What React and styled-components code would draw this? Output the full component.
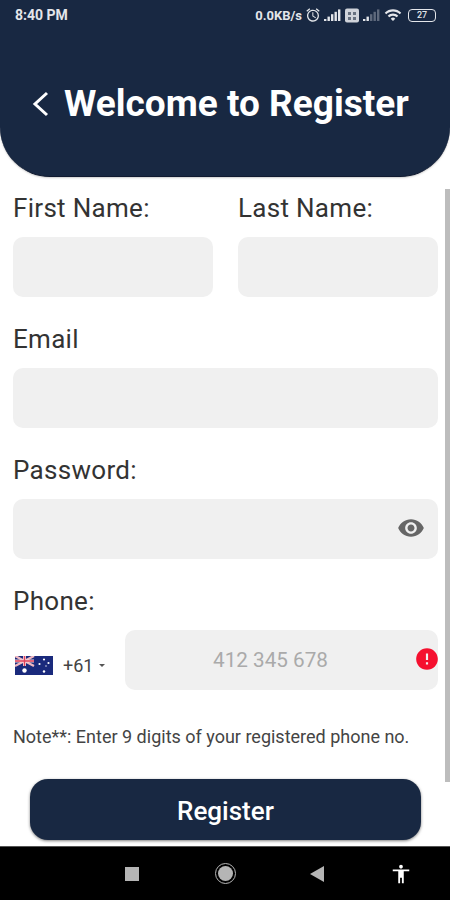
import { createGlobalStyle, styled } from "styled-components";
import { MdVisibility, MdError, MdAccessibility, MdWifi, MdAccessAlarm } from "react-icons/md";

const Global = createGlobalStyle`
  html, body {
    margin: 0;
    padding: 0;
    background: #fff;
    font-family: Roboto, "Liberation Sans", sans-serif;
  }
  * { box-sizing: border-box; }
`;

const Screen = styled.div`
  width: 450px;
  height: 900px;
  display: flex;
  flex-direction: column;
  overflow: hidden;
  position: relative;
`;

const Header = styled.header`
  height: 177px;
  flex-shrink: 0;
  background: #182842;
  border-radius: 0 0 50px 50px;
  border-bottom: 1px solid #101a30;
  box-shadow: 0 1px 2px rgba(0, 0, 0, 0.2);
  color: #fff;
  display: flex;
  flex-direction: column;
`;

const StatusBar = styled.div`
  height: 30px;
  padding: 0 14px 0 15px;
  display: flex;
  align-items: center;
  justify-content: space-between;
  font-size: 14px;
  font-weight: 700;
  color: #e4e6ea;
`;

const Speed = styled.span`
  font-size: 13px;
`;

const StatusRight = styled.div`
  display: flex;
  align-items: center;
  gap: 3px;
`;

const Battery = styled.span`
  width: 28px;
  height: 13px;
  margin-left: 3px;
  border: 1.5px solid #e4e6ea;
  border-radius: 4px;
  font-size: 9px;
  line-height: 10px;
  text-align: center;
  font-weight: 500;
`;

const TitleRow = styled.div`
  display: flex;
  align-items: center;
  gap: 14px;
  padding: 42px 0 0 30px;
`;

const Title = styled.h1`
  margin: 0;
  font-size: 37px;
  line-height: 64px;
  font-weight: 700;
`;

const Form = styled.form`
  padding: 12px 12px 0 13px;
  display: flex;
  flex-direction: column;
  gap: 23px;
`;

const Row = styled.div`
  display: flex;
  gap: 25px;
`;

const Field = styled.div`
  flex: 1;
  display: flex;
  flex-direction: column;
  gap: 10px;
`;

const Label = styled.label`
  font-size: 26px;
  line-height: 38px;
  height: 38px;
  color: #333;
  letter-spacing: 0.3px;
`;

const Input = styled.div`
  flex: ${(p) => (p.$grow ? 1 : "none")};
  height: 60px;
  background: #f0f0f0;
  border-radius: 10px;
  display: flex;
  align-items: center;
  justify-content: ${(p) => p.$justify || "flex-start"};
  position: relative;
`;

const Eye = styled(MdVisibility)`
  margin: 0 13px 2px 0;
  color: #666;
  font-size: 28px;
`;

const PhoneRow = styled.div`
  display: flex;
  align-items: center;
`;

const Dial = styled.div`
  width: 112px;
  padding: 10px 0 0 2px;
  display: flex;
  align-items: center;
  font-size: 18px;
  color: #444;
`;

const DialCode = styled.span`
  margin-left: 10px;
`;

const Caret = styled.span`
  width: 0;
  height: 0;
  margin-left: 6px;
  border-left: 3px solid transparent;
  border-right: 3px solid transparent;
  border-top: 3px solid #555;
`;

const Placeholder = styled.span`
  margin-left: 88px;
  font-size: 20.7px;
  color: #aaa;
`;

const Alert = styled(MdError)`
  position: absolute;
  right: -2px;
  top: 16px;
  color: #f5102f;
  font-size: 26px;
`;

const Note = styled.p`
  margin: 35px 0 0;
  padding: 0 13px;
  font-size: 18px;
  line-height: 24px;
  color: #444;
  white-space: nowrap;
`;

const Button = styled.button`
  width: 391px;
  height: 61px;
  margin: 30px 0 0 30px;
  padding-top: 3px;
  flex-shrink: 0;
  background: #182842;
  border: none;
  border-radius: 18px;
  box-shadow: 0 1px 3px rgba(0, 0, 0, 0.5);
  color: #fff;
  font-family: inherit;
  font-size: 26px;
  font-weight: 500;
`;

const Scrollbar = styled.div`
  position: absolute;
  right: 0;
  top: 189px;
  width: 5px;
  height: 593px;
  background: #bdbdbd;
`;

const NavBar = styled.nav`
  height: 54px;
  margin-top: auto;
  flex-shrink: 0;
  background: #000;
  border-top: 1px solid #555;
  padding-left: 86px;
  display: grid;
  grid-template-columns: 92px 94px 90px 78px;
  align-items: center;
  justify-items: center;
`;

const Square = styled.span`
  width: 14px;
  height: 14px;
  background: #b5b5b5;
`;

const Circle = styled.span`
  width: 15px;
  height: 15px;
  border-radius: 50%;
  background: #b5b5b5;
  outline: 1.5px solid #b5b5b5;
  outline-offset: 2px;
`;

const Back = styled.span`
  width: 0;
  height: 0;
  border-top: 8px solid transparent;
  border-bottom: 8px solid transparent;
  border-right: 14px solid #b5b5b5;
`;

const Person = styled(MdAccessibility)`
  color: #fff;
  font-size: 22px;
`;

const Signal = ({ faded }) => (
  <svg width="18" height="12" viewBox="0 0 18 12">
    {[0, 1, 2, 3, 4].map((i) => (
      <rect
        key={i}
        x={i * 3.5}
        y={10 - i * 2.4}
        width="2.4"
        height={2 + i * 2.4}
        fill="#e4e6ea"
        opacity={faded && i > 1 ? 0.35 : 1}
      />
    ))}
  </svg>
);

const Flag = () => (
  <svg width="38" height="19" viewBox="0 0 38 19">
    <rect width="38" height="19" fill="#1a2a7c" />
    <path d="M0 0L19 10M19 0L0 10" stroke="#f0b8c0" strokeWidth="2.4" />
    <path d="M9.5 0V10M0 5H19" stroke="#f4d8dc" strokeWidth="3" />
    <path d="M9.5 0V10M0 5H19" stroke="#e0405a" strokeWidth="1.4" />
    <circle cx="9.5" cy="14.5" r="2.2" fill="#fff" />
    <circle cx="29" cy="3.5" r="1.1" fill="#fff" />
    <circle cx="29" cy="15.5" r="1.2" fill="#fff" />
    <circle cx="24.5" cy="8" r="1.1" fill="#fff" />
    <circle cx="33.5" cy="7" r="1.1" fill="#fff" />
    <circle cx="31" cy="10" r="0.7" fill="#fff" />
  </svg>
);

const BackArrow = () => (
  <svg width="20" height="28" viewBox="0 0 20 28">
    <path d="M17 3L5 14L17 25" fill="none" stroke="#fff" strokeWidth="3" />
  </svg>
);

const App = () => {
  return (
    <Screen>
      <Global />
      <Header>
        <StatusBar>
          <span>8:40 PM</span>
          <StatusRight>
            <Speed>0.0KB/s</Speed>
            <MdAccessAlarm size={16} />
            <Signal />
            <svg width="15" height="15" viewBox="0 0 15 15">
              <rect width="14" height="14" y="0.5" rx="2" fill="#cfd3da" />
              <path d="M3 4h3v3H3zM8 4h3v3H8zM3 9h3v3H3zM8 9h3v3H8z" fill="#66707f" />
            </svg>
            <Signal faded />
            <MdWifi size={18} />
            <Battery>27</Battery>
          </StatusRight>
        </StatusBar>
        <TitleRow>
          <BackArrow />
          <Title>Welcome to Register</Title>
        </TitleRow>
      </Header>

      <Form>
        <Row>
          <Field>
            <Label>First Name:</Label>
            <Input />
          </Field>
          <Field>
            <Label>Last Name:</Label>
            <Input />
          </Field>
        </Row>
        <Field>
          <Label>Email</Label>
          <Input />
        </Field>
        <Field>
          <Label>Password:</Label>
          <Input $justify="flex-end">
            <Eye />
          </Input>
        </Field>
        <Field>
          <Label>Phone:</Label>
          <PhoneRow>
            <Dial>
              <Flag />
              <DialCode>+61</DialCode>
              <Caret />
            </Dial>
            <Input $grow>
              <Placeholder>412 345 678</Placeholder>
              <Alert />
            </Input>
          </PhoneRow>
        </Field>
      </Form>

      <Note>Note**: Enter 9 digits of your registered phone no.</Note>
      <Button type="button">Register</Button>
      <Scrollbar />

      <NavBar>
        <Square />
        <Circle />
        <Back />
        <Person />
      </NavBar>
    </Screen>
  );
};

export default App;
